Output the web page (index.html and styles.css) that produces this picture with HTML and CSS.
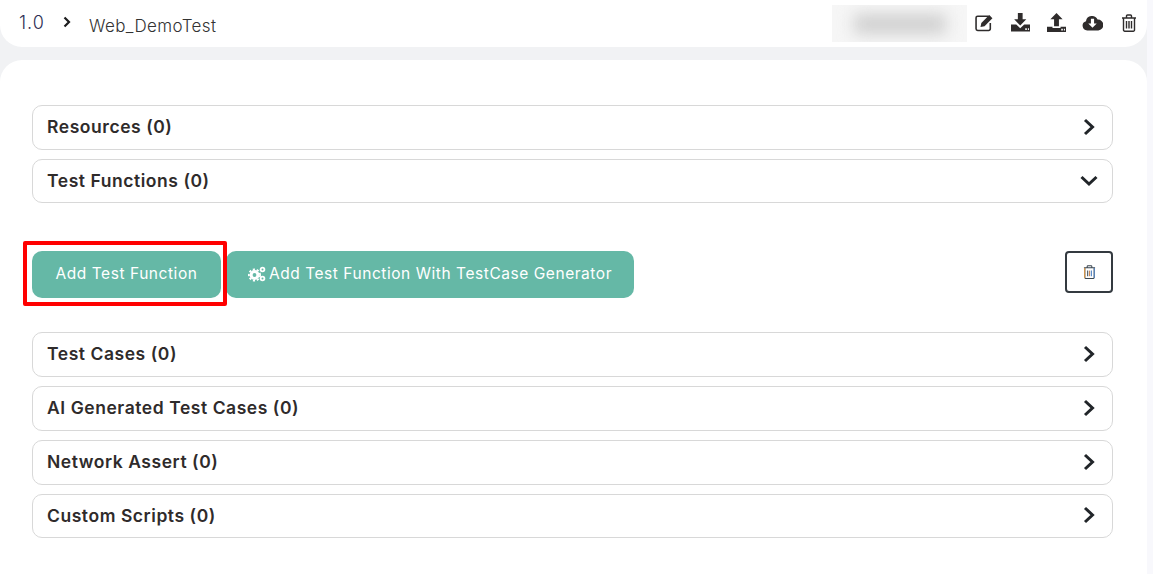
FILE: index.html
```html
<!DOCTYPE html>
<html lang="en">
<head>
<meta charset="utf-8">
<title>Web_DemoTest</title>
<link rel="stylesheet" href="styles.css">
</head>
<body>
<div class="page">
  <header class="topbar">
    <nav class="crumbs">
      <span class="crumb-version">1.0</span>
      <svg class="crumb-sep" viewBox="0 0 10 12"><path d="M2.500 1.500 7 6l-4.500 4.500" fill="none" stroke="#1d1d1f" stroke-width="2.200"/></svg>
      <span class="crumb-name">Web_DemoTest</span>
    </nav>
    <div class="tools">
      <div class="blurbox"><div class="blurred"></div></div>
      <div class="tool-icons">
        <svg class="tool" viewBox="1 0 18 18"><path d="M14 3H3.500A1.500 1.500 0 0 0 2 4.500v10.500A1.500 1.500 0 0 0 3.500 16.500h10.500a1.500 1.500 0 0 0 1.500-1.500V9.500" fill="none" stroke="#2f2c2c" stroke-width="1.500"/><path d="M7 9.500 14.500 2l3 3L10 12.500l-3.800.8z" fill="#2f2c2c"/></svg>
        <svg class="tool" viewBox="1 0 18 18"><path d="M7.500 0h4.500v6h3.500L9.750 11.800 4 6h3.500zM1 11h5l3.750 3.500L13.500 11H19v6.500H1z" fill="#2f2c2c"/><path d="M14.500 14.500h1.500V16h-1.500zM17 14.500h1V16h-1z" fill="#fff"/></svg>
        <svg class="tool" viewBox="1 0 18 18"><path d="M10 0l5.800 6h-3.500v6.500H7.700V6H4.200zM1 13h5.200v1.200h7.600V13H19v5H1z" fill="#2f2c2c"/><path d="M14.500 15h1.500v1.500h-1.500zM17 15h1v1.500h-1z" fill="#fff"/></svg>
        <svg class="tool tool-cloud" viewBox="1 0 18 18"><path d="M5 16.500a4.500 4.500 0 0 1-1.200-8.800 5.800 5.800 0 0 1 11-1.500 4.500 4.500 0 0 1 .7 10.300z" fill="#2f2c2c"/><path d="M8.500 5.500h3V10h2.500L10 14 6 10h2.500z" fill="#fff"/></svg>
        <svg class="tool-trash" viewBox="0 0 16 18"><path d="M1 4h14M5.500 4V2a1 1 0 0 1 1-1h3a1 1 0 0 1 1 1v2M2.500 4v12a1.200 1.200 0 0 0 1.200 1.200h8.600a1.200 1.200 0 0 0 1.200-1.200V4M5.500 7v7.500M8 7v7.500M10.500 7v7.500" fill="none" stroke="#2f2c2c" stroke-width="1.400"/></svg>
      </div>
    </div>
  </header>

  <main class="card">
    <section class="group">
      <div class="row"><span class="row-title">Resources (0)</span><svg class="chev" viewBox="0 0 16 18"><path d="M4 2l7.500 7L4 16" fill="none" stroke="#212529" stroke-width="3"/></svg></div>
      <div class="row row-short"><span class="row-title">Test Functions (0)</span><svg class="chev-down" viewBox="0 0 18 12"><path d="M1.500 2l7.500 7 7.500-7" fill="none" stroke="#212529" stroke-width="3"/></svg></div>
    </section>

    <section class="actions">
      <div class="action-buttons">
        <div class="highlight"><button class="btn btn-add">Add Test Function</button></div>
        <button class="btn btn-gen">
          <svg class="cogs" viewBox="0 0 18 16"><circle cx="6.500" cy="9" r="3.400" fill="none" stroke="#fff" stroke-width="3"/><circle cx="6.500" cy="9" r="5.600" fill="none" stroke="#fff" stroke-width="1.800" stroke-dasharray="2.200 1.800"/><circle cx="14.500" cy="3.500" r="1.900" fill="none" stroke="#fff" stroke-width="1.800"/><circle cx="14.500" cy="12.500" r="1.900" fill="none" stroke="#fff" stroke-width="1.800"/></svg>
          <span>Add Test Function With TestCase Generator</span>
        </button>
      </div>
      <button class="btn-del" aria-label="Delete">
        <svg viewBox="0 0 14 15"><path d="M1 3h12M4.500 3V1.500a.8.800 0 0 1 .8-.8h3.400a.8.800 0 0 1 .8.800V3M2 3v10.500a1 1 0 0 0 1 1h8a1 1 0 0 0 1-1V3" fill="none" stroke="#3a4650" stroke-width="1.100"/><path d="M1.800 3v11" stroke="#e79a3f" stroke-width="1"/><path d="M5 6v6" stroke="#4a5a66" stroke-width="1.200"/><path d="M7 6v6" stroke="#c98a5a" stroke-width="1.200"/><path d="M9 6v6" stroke="#4f83c4" stroke-width="1.200"/><path d="M12.200 3v11" stroke="#4f83c4" stroke-width="1"/></svg>
      </button>
    </section>

    <section class="group">
      <div class="row"><span class="row-title">Test Cases (0)</span><svg class="chev" viewBox="0 0 16 18"><path d="M4 2l7.500 7L4 16" fill="none" stroke="#212529" stroke-width="3"/></svg></div>
      <div class="row"><span class="row-title">AI Generated Test Cases (0)</span><svg class="chev" viewBox="0 0 16 18"><path d="M4 2l7.500 7L4 16" fill="none" stroke="#212529" stroke-width="3"/></svg></div>
      <div class="row"><span class="row-title">Network Assert (0)</span><svg class="chev" viewBox="0 0 16 18"><path d="M4 2l7.500 7L4 16" fill="none" stroke="#212529" stroke-width="3"/></svg></div>
      <div class="row row-short"><span class="row-title">Custom Scripts (0)</span><svg class="chev" viewBox="0 0 16 18"><path d="M4 2l7.500 7L4 16" fill="none" stroke="#212529" stroke-width="3"/></svg></div>
    </section>
  </main>
</div>
</body>
</html>
```

FILE: styles.css
```css
*, *::before, *::after { box-sizing: border-box; }
html, body { margin: 0; height: 100%; }
body {
  background: #f8f8fc;
  font-family: "Inter", "Noto Sans", sans-serif;
  color: #2e2a2a;
  overflow: hidden;
}
.page {
  width: 1147px;
  height: 574px;
  background: #f1f2f4;
  display: flex;
  flex-direction: column;
  gap: 13px;
}
.topbar {
  height: 47px;
  background: #fff;
  border-radius: 0 0 22px 22px;
  display: flex;
  align-items: center;
  justify-content: space-between;
  padding: 0 10px 0 19px;
}
.crumbs { display: flex; align-items: center; }
.crumb-version { font-size: 18px; font-weight: 300; color: #2f2f55; letter-spacing: 1px; width: 41px; margin-bottom: 3px; }
.crumb-sep { width: 10px; height: 12px; margin: 0 0 3px 2px; }
.crumb-name { font-size: 17px; font-weight: 300; color: #333; letter-spacing: 0.4px; margin-left: 17px; margin-top: 5px; }
.tools { display: flex; align-items: center; }
.blurbox {
  width: 135px;
  height: 37px;
  background: #f6f6f6;
  display: flex;
  align-items: center;
  justify-content: center;
  margin-right: 7px;
  overflow: hidden;
}
.blurred {
  width: 92px;
  height: 20px;
  background: #cfcfcf;
  filter: blur(8px);
}
.tool-icons { display: flex; align-items: center; margin-bottom: 2px; }
.tool { width: 21px; height: 19px; margin-right: 15px; display: block; }
.tool-cloud { margin-right: 18px; }
.tool-trash { width: 16px; height: 18px; display: block; }
.card {
  flex: 1;
  background: #fff;
  border-radius: 22px 22px 0 0;
  padding: 45px 34px 0 32px;
}
.group { display: flex; flex-direction: column; gap: 9px; }
.row {
  height: 45px;
  border: 1px solid #d8d8d8;
  border-radius: 10px;
  display: flex;
  align-items: center;
  justify-content: space-between;
  padding: 0 15px 0 14px;
}
.row-short { height: 44px; }
.row-title {
  font-size: 17.500px;
  font-weight: 600;
  color: #2f2b2b;
  letter-spacing: 0.55px;
  margin-bottom: 2px;
}
.chev { width: 16px; height: 18px; display: block; margin-bottom: 2px; }
.chev-down { width: 18px; height: 12px; display: block; margin: 0 -1px 0 0; }
.actions {
  display: flex;
  justify-content: space-between;
  align-items: flex-start;
  margin: 48px 0 34px;
  height: 47px;
}
.action-buttons { display: flex; gap: 5px; }
.highlight { position: relative; }
.highlight::after {
  content: "";
  position: absolute;
  left: -9px;
  top: -10px;
  width: 204px;
  height: 65px;
  border: 4px solid #f00;
  border-radius: 2px;
  pointer-events: none;
}
.btn {
  height: 47px;
  background: #65b8a6;
  color: #fff;
  border: 0;
  border-radius: 10px;
  font-family: inherit;
  font-size: 15.500px;
  letter-spacing: 0.55px;
  padding: 0 0 2px;
  display: flex;
  align-items: center;
  justify-content: center;
}
.btn-add { width: 189px; }
.btn-gen { width: 408px; gap: 3px; }
.cogs { width: 18px; height: 16px; }
.btn-del {
  width: 48px;
  height: 42px;
  background: #fff;
  border: 2px solid #343a40;
  border-radius: 4px;
  padding: 0;
  display: flex;
  align-items: center;
  justify-content: center;
}
.btn-del svg { width: 13px; height: 14px; }
```
